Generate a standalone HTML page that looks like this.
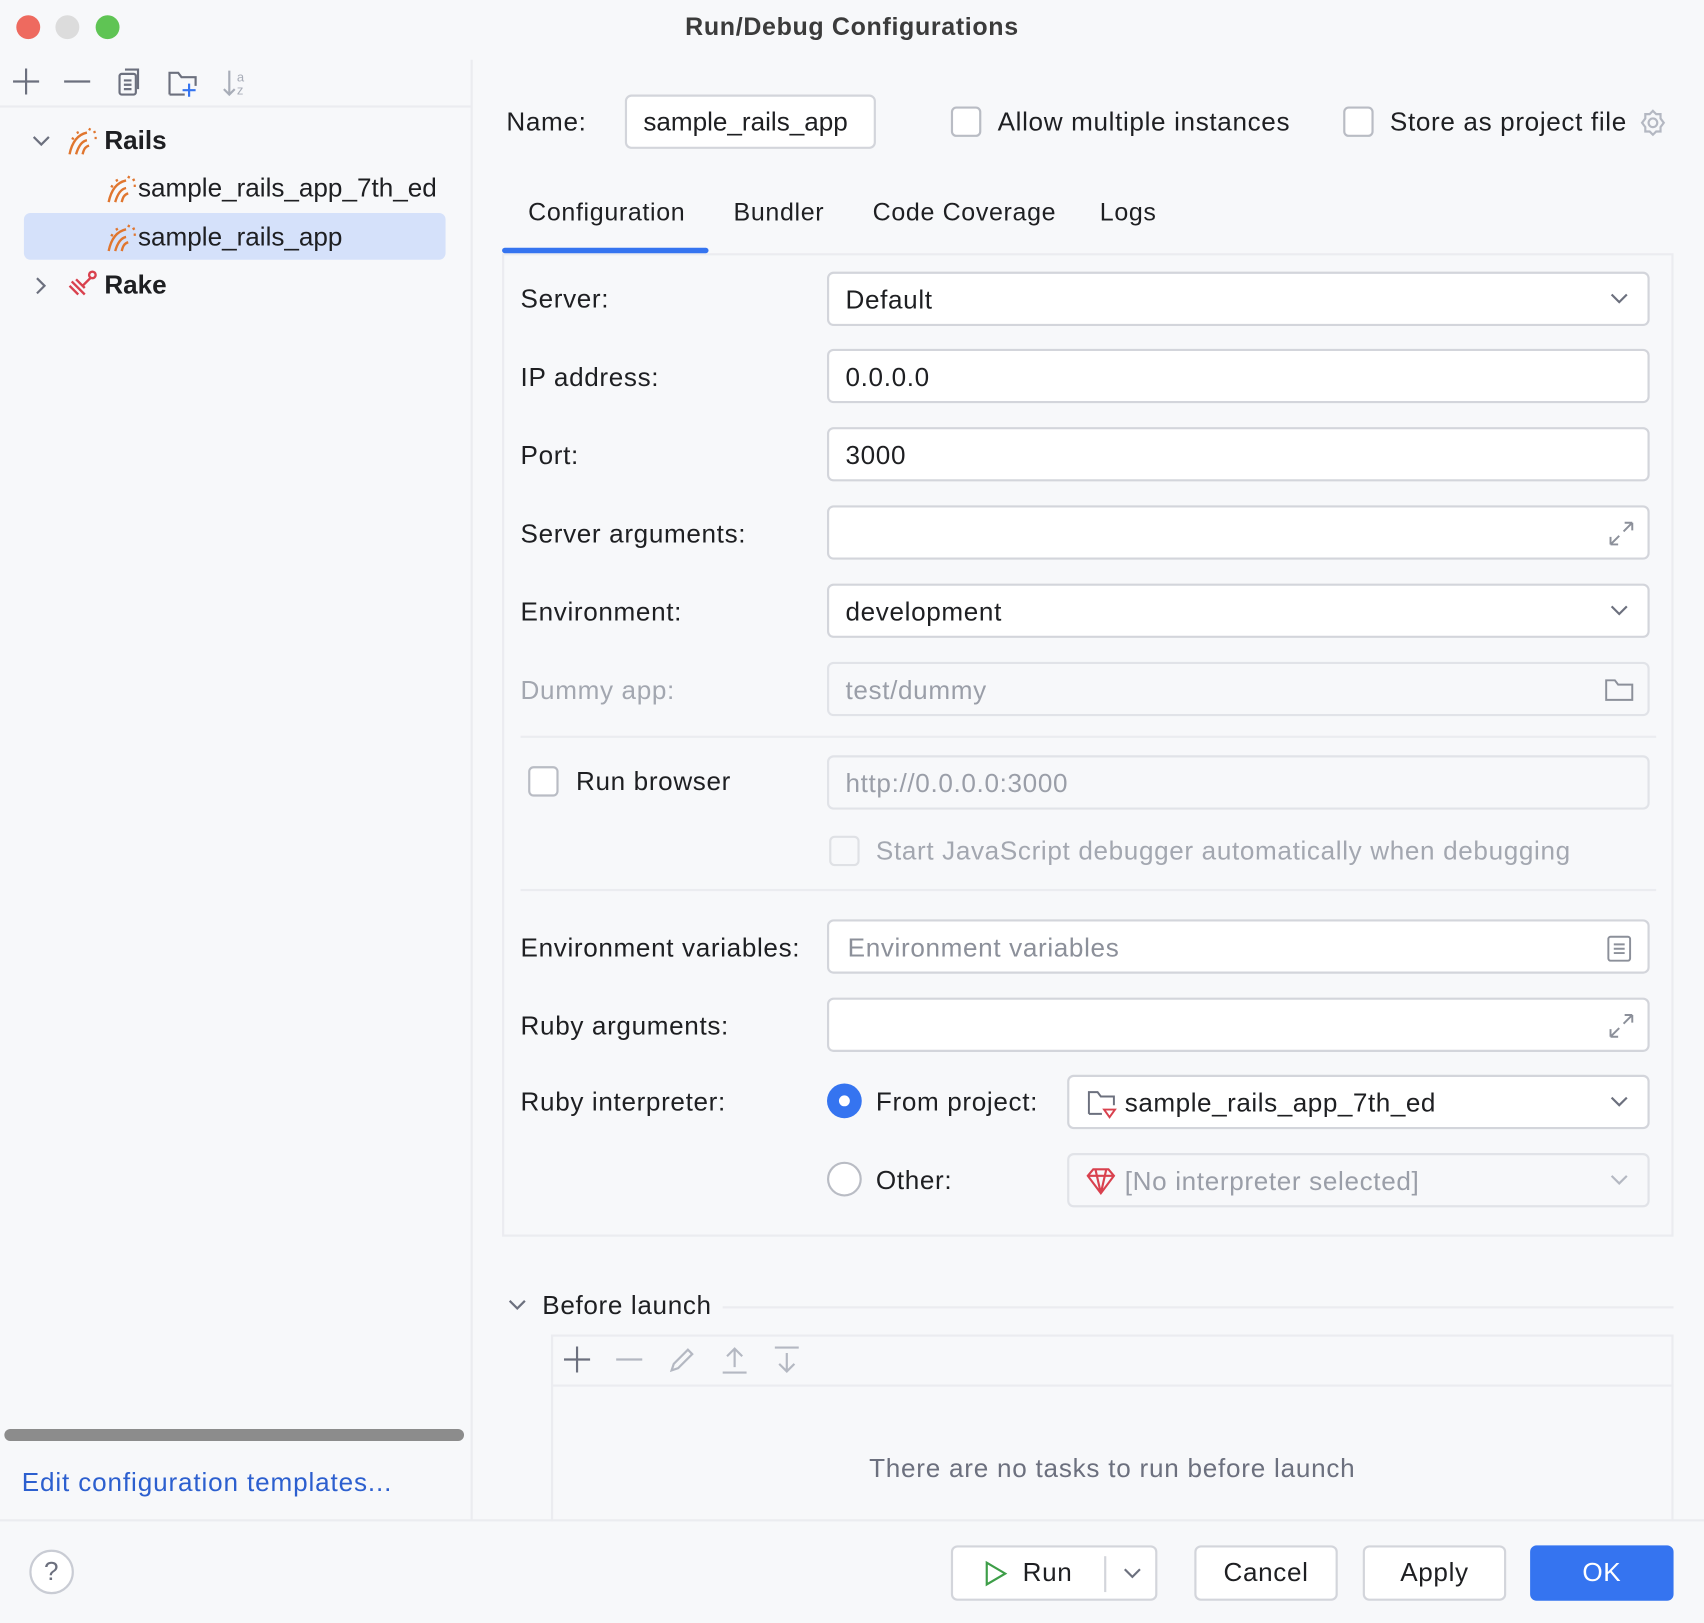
<!DOCTYPE html>
<html><head><meta charset="utf-8"><style>
*{box-sizing:border-box;margin:0;padding:0}
html,body{width:1704px;height:1622px;overflow:hidden;background:#f7f8fa}
#w{position:absolute;left:0;top:0;width:1568px;height:1493px;transform:scale(1.08673);transform-origin:0 0;background:#f7f8fa;font-family:"Liberation Sans",sans-serif;font-size:24px;letter-spacing:0.6px;color:#1e1f22}
.a{position:absolute;white-space:nowrap}
.f{position:absolute;background:#fff;border:2px solid #d3d5db;border-radius:6px;height:50px}
.f span{position:absolute;left:15px;top:11px}
.dis{background:#f7f8fa;border-color:#e1e3e8;color:#9a9ea8}
.cb{position:absolute;width:28px;height:28px;border:2px solid #b9bcc4;border-radius:5px;background:#fff}
.btn{position:absolute;top:1422px;height:51px;border:2px solid #d3d5db;border-radius:6px;background:#fff;text-align:center;line-height:47px;font-size:24px}
.lab{position:absolute;left:479px}
.chev{position:absolute;right:16px;top:15px}
.t0{letter-spacing:0}
</style></head><body><div id="w">
<div class="a" style="left:15px;top:14px;width:22px;height:22px;border-radius:50%;background:#ee6a5f"></div>
<div class="a" style="left:51px;top:14px;width:22px;height:22px;border-radius:50%;background:#dcdcdc"></div>
<div class="a" style="left:88px;top:14px;width:22px;height:22px;border-radius:50%;background:#5fc454"></div>
<div class="a" style="left:0;width:1568px;top:11px;text-align:center;font-weight:bold;color:#3b3b3b;font-size:23px">Run/Debug Configurations</div>

<div class="a" style="left:433px;top:55px;width:2px;height:1344px;background:#ebecf0"></div>
<div class="a" style="left:0;top:97px;width:433px;height:2px;background:#ebecf0"></div>
<svg class="a" style="left:0;top:55px" width="240" height="40" stroke="#6c707e" stroke-width="2" fill="none">
<path d="M12 20h24M24 8v24M59 20h24"/>
<rect x="110" y="13" width="15" height="19" rx="2"/><path d="M115 9h12v18M114 19h7M114 23h7M114 27h7"/>
<path d="M156 32V12h8l3 4h13v8M156 32h14"/><path d="M168 28h12M174 22v12" stroke="#3574f0"/>
<path d="M211 10v22M206 27l5 5 5-5" stroke="#a8adb8"/>
<text x="218" y="20" font-size="12" fill="#a8adb8" stroke="none" font-family="Liberation Sans">a</text>
<text x="218" y="32" font-size="12" fill="#a8adb8" stroke="none" font-family="Liberation Sans">z</text>
</svg>
<svg class="a" style="left:28px;top:120px" width="20" height="20" stroke="#6c707e" stroke-width="2" fill="none"><path d="M3 6l7 7 7-7"/></svg>
<svg class="a" style="left:28px;top:253px" width="20" height="20" stroke="#6c707e" stroke-width="2" fill="none"><path d="M6 3l7 7-7 7"/></svg>
<svg class="a" style="left:60px;top:114px" width="30" height="30" stroke="#e0762f" stroke-width="2.2" fill="none"><path d="M4 28c2-10 7-18 16-20M10 28c2-7 5-12 10-13M16 28c1-4 2-7 6-8"/><path d="M22 6l1-2M26 8l2-1M27 13l2 0M8 14l-2-1M12 9l-1-2" stroke-width="2"/></svg>
<div class="a t0" style="left:96px;top:116px;font-weight:bold;font-size:24px">Rails</div>
<div class="a" style="left:22px;top:196px;width:388px;height:43px;border-radius:6px;background:#d5e1fa"></div>
<svg class="a" style="left:96px;top:158px" width="30" height="30" stroke="#e0762f" stroke-width="2.2" fill="none"><path d="M4 28c2-10 7-18 16-20M10 28c2-7 5-12 10-13M16 28c1-4 2-7 6-8"/><path d="M22 6l1-2M26 8l2-1M27 13l2 0M8 14l-2-1M12 9l-1-2"/></svg>
<div class="a t0" style="left:127px;top:160px;font-size:24px">sample_rails_app_7th_ed</div>
<svg class="a" style="left:96px;top:203px" width="30" height="30" stroke="#e0762f" stroke-width="2.2" fill="none"><path d="M4 28c2-10 7-18 16-20M10 28c2-7 5-12 10-13M16 28c1-4 2-7 6-8"/><path d="M22 6l1-2M26 8l2-1M27 13l2 0M8 14l-2-1M12 9l-1-2"/></svg>
<div class="a t0" style="left:127px;top:205px;font-size:24px">sample_rails_app</div>
<svg class="a" style="left:60px;top:247px" width="30" height="30" stroke="#d9414e" stroke-width="2.2" fill="none"><path d="M6 12l12 12M4 16l8 8M10 10l8 8M16 16l8-8"/><circle cx="25" cy="6" r="3"/></svg>
<div class="a t0" style="left:96px;top:249px;font-weight:bold;font-size:24px">Rake</div>
<div class="a" style="left:4px;top:1315px;width:423px;height:11px;border-radius:6px;background:#8c8c8c"></div>
<div class="a" style="left:20px;top:1351px;color:#2c5fcf;font-size:24px;letter-spacing:0.8px">Edit configuration templates...</div>

<div class="a" style="left:0;top:1398px;width:1568px;height:2px;background:#ebecf0"></div>
<div class="a" style="left:27px;top:1426px;width:41px;height:41px;border-radius:50%;border:2px solid #c9ccd4;background:#fff;text-align:center;line-height:37px;color:#6c707e;font-size:24px">?</div>
<div class="btn" style="left:875px;width:190px"><svg class="a" style="left:26px;top:11px" width="26" height="26" fill="none" stroke="#3e9e49" stroke-width="2"><path d="M5 3l17 10-17 10z"/></svg><span class="a" style="left:64px;top:0">Run</span><div class="a" style="left:139px;top:8px;width:2px;height:33px;background:#d3d5db"></div><svg class="a" style="left:155px;top:16px" width="20" height="16" stroke="#6c707e" stroke-width="2" fill="none"><path d="M3 4l7 7 7-7"/></svg></div>
<div class="btn" style="left:1099px;width:132px">Cancel</div>
<div class="btn" style="left:1254px;width:132px">Apply</div>
<div class="btn" style="left:1408px;width:132px;background:#3574f0;border-color:#3574f0;color:#fff">OK</div>

<div class="a" style="left:466px;top:99px">Name:</div>
<div class="f" style="left:575px;top:87px;width:231px"><span class="t0" style="left:15px;top:10px">sample_rails_app</span></div>
<div class="cb" style="left:875px;top:98px"></div>
<div class="a" style="left:918px;top:99px">Allow multiple instances</div>
<div class="cb" style="left:1236px;top:98px"></div>
<div class="a" style="left:1279px;top:99px">Store as project file</div>
<svg class="a" style="left:1507px;top:99px" width="28" height="28" fill="none" stroke="#b4b8c2" stroke-width="2"><circle cx="14" cy="14" r="4"/><path d="M14 3l3 3h4v4l3 4-3 4v4h-4l-3 3-3-3H7v-4l-3-4 3-4V6h4z"/></svg>

<div class="a" style="left:486px;top:182px;font-size:23px">Configuration</div>
<div class="a" style="left:675px;top:182px;font-size:23px">Bundler</div>
<div class="a" style="left:803px;top:182px;font-size:23px">Code Coverage</div>
<div class="a" style="left:1012px;top:182px;font-size:23px">Logs</div>
<div class="a" style="left:462px;top:233px;width:1078px;height:905px;border:2px solid #ebecf0"></div>
<div class="a" style="left:462px;top:228px;width:190px;height:5px;border-radius:3px;background:#3574f0"></div>

<div class="lab" style="top:262px">Server:</div>
<div class="f" style="left:761px;top:250px;width:757px"><span>Default</span><svg class="chev" width="20" height="16" stroke="#6c707e" stroke-width="2" fill="none"><path d="M3 4l7 7 7-7"/></svg></div>
<div class="lab" style="top:334px">IP address:</div>
<div class="f" style="left:761px;top:321px;width:757px"><span>0.0.0.0</span></div>
<div class="lab" style="top:406px">Port:</div>
<div class="f" style="left:761px;top:393px;width:757px"><span>3000</span></div>
<div class="lab" style="top:478px">Server arguments:</div>
<div class="f" style="left:761px;top:465px;width:757px"><svg class="a" style="right:10px;top:10px" width="28" height="28" stroke="#8c909a" stroke-width="1.8" fill="none"><path d="M4 24l8-8M4 24v-7M4 24h7M24 4l-8 8M24 4v7M24 4h-7"/></svg></div>
<div class="lab" style="top:550px">Environment:</div>
<div class="f" style="left:761px;top:537px;width:757px"><span>development</span><svg class="chev" width="20" height="16" stroke="#6c707e" stroke-width="2" fill="none"><path d="M3 4l7 7 7-7"/></svg></div>
<div class="lab" style="top:622px;color:#a3a7b0">Dummy app:</div>
<div class="f dis" style="left:761px;top:609px;width:757px"><span>test/dummy</span><svg class="a" style="right:12px;top:12px" width="28" height="24" stroke="#8c909a" stroke-width="1.8" fill="none"><path d="M2 21V3h8l3 4h13v14z"/></svg></div>
<div class="a" style="left:479px;top:677px;width:1045px;height:2px;background:#ebecf0"></div>
<div class="cb" style="left:486px;top:705px"></div>
<div class="a" style="left:530px;top:706px">Run browser</div>
<div class="f dis" style="left:761px;top:695px;width:757px"><span>http://0.0.0.0:3000</span></div>
<div class="cb" style="left:763px;top:769px;border-color:#dfe1e5;background:#f7f8fa"></div>
<div class="a" style="left:806px;top:770px;color:#a3a7b0">Start JavaScript debugger automatically when debugging</div>
<div class="a" style="left:479px;top:818px;width:1045px;height:2px;background:#ebecf0"></div>
<div class="lab" style="top:859px">Environment variables:</div>
<div class="f" style="left:761px;top:846px;width:757px"><span style="color:#8c909a;left:17px">Environment variables</span><svg class="a" style="right:14px;top:12px" width="24" height="26" stroke="#8c909a" stroke-width="1.8" fill="none"><rect x="2" y="2" width="20" height="22" rx="2"/><path d="M7 9h10M7 13h10M7 17h10"/></svg></div>
<div class="lab" style="top:931px">Ruby arguments:</div>
<div class="f" style="left:761px;top:918px;width:757px"><svg class="a" style="right:10px;top:10px" width="28" height="28" stroke="#8c909a" stroke-width="1.8" fill="none"><path d="M4 24l8-8M4 24v-7M4 24h7M24 4l-8 8M24 4v7M24 4h-7"/></svg></div>
<div class="lab" style="top:1001px">Ruby interpreter:</div>
<div class="a" style="left:761px;top:997px;width:32px;height:32px;border-radius:50%;background:#3574f0"><div class="a" style="left:11px;top:11px;width:10px;height:10px;border-radius:50%;background:#fff"></div></div>
<div class="a" style="left:806px;top:1001px">From project:</div>
<div class="f" style="left:982px;top:989px;width:536px"><svg class="a" style="left:16px;top:10px" width="30" height="30" fill="none" stroke-width="1.8"><path d="M2 24V4h8l3 4h12v8M2 24h12" stroke="#6c707e"/><path d="M16 20h10l-5 7z" stroke="#d9414e"/></svg><span style="left:51px;letter-spacing:0.5px">sample_rails_app_7th_ed</span><svg class="chev" width="20" height="16" stroke="#6c707e" stroke-width="2" fill="none"><path d="M3 4l7 7 7-7"/></svg></div>
<div class="a" style="left:761px;top:1069px;width:32px;height:32px;border-radius:50%;border:2px solid #b9bcc4;background:#fff"></div>
<div class="a" style="left:806px;top:1073px">Other:</div>
<div class="f dis" style="left:982px;top:1061px;width:536px"><svg class="a" style="left:14px;top:10px" width="30" height="28" fill="none" stroke="#d9414e" stroke-width="2"><path d="M3 9l5-6h14l5 6-12 16z M3 9h24M10 3l5 22M20 3l-5 22"/></svg><span style="left:51px">[No interpreter selected]</span><svg class="chev" width="20" height="16" stroke="#b4b8c2" stroke-width="2" fill="none"><path d="M3 4l7 7 7-7"/></svg></div>

<svg class="a" style="left:466px;top:1191px" width="20" height="20" stroke="#6c707e" stroke-width="2" fill="none"><path d="M3 6l7 7 7-7"/></svg>
<div class="a" style="left:499px;top:1188px">Before launch</div>
<div class="a" style="left:665px;top:1202px;width:875px;height:2px;background:#ebecf0"></div>
<div class="a" style="left:507px;top:1228px;width:1033px;height:172px;border:2px solid #ebecf0;border-bottom:none"></div>
<div class="a" style="left:507px;top:1274px;width:1033px;height:2px;background:#ebecf0"></div>
<svg class="a" style="left:515px;top:1236px" width="230" height="32" stroke-width="2" fill="none"><path d="M4 15h24M16 3v24" stroke="#6c707e"/><path d="M52 15h24" stroke="#b4b8c2"/><path d="M103 25l2-6 13-13 4 4-13 13z" stroke="#b4b8c2"/><path d="M150 27h22M161 22V5M154 12l7-7 7 7" stroke="#b4b8c2"/><path d="M198 4h22M209 9v17M202 19l7 7 7-7" stroke="#b4b8c2"/></svg>
<div class="a" style="left:507px;width:1033px;top:1338px;text-align:center;color:#6c707e;letter-spacing:0.7px">There are no tasks to run before launch</div>
</div></body></html>
